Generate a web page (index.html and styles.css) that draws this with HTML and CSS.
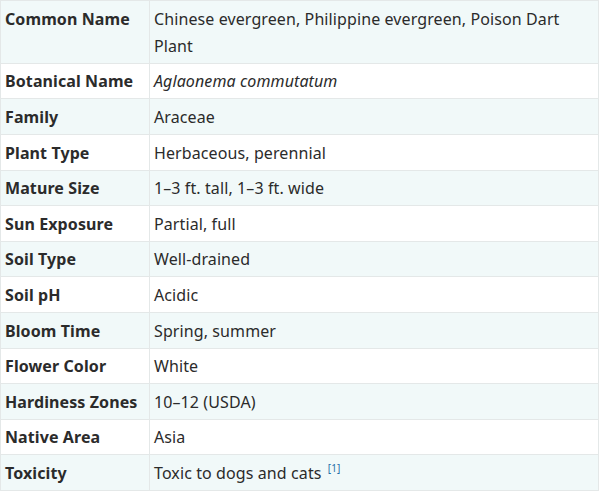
FILE: index.html
```html
<!DOCTYPE html>
<html>
<head>
<meta charset="utf-8">
<link rel="stylesheet" href="styles.css">
</head>
<body>
<table class="info">
  <tbody>
    <tr><th>Common Name</th><td>Chinese evergreen, Philippine evergreen, Poison Dart Plant</td></tr>
    <tr><th>Botanical Name</th><td><em>Aglaonema commutatum</em></td></tr>
    <tr><th>Family</th><td>Araceae</td></tr>
    <tr><th>Plant Type</th><td>Herbaceous, perennial</td></tr>
    <tr><th>Mature Size</th><td>1–3 ft. tall, 1–3 ft. wide</td></tr>
    <tr><th>Sun Exposure</th><td>Partial, full</td></tr>
    <tr><th>Soil Type</th><td>Well-drained</td></tr>
    <tr><th>Soil pH</th><td>Acidic</td></tr>
    <tr><th>Bloom Time</th><td>Spring, summer</td></tr>
    <tr><th>Flower Color</th><td>White</td></tr>
    <tr><th>Hardiness Zones</th><td>10–12 (USDA)</td></tr>
    <tr><th>Native Area</th><td>Asia</td></tr>
    <tr><th>Toxicity</th><td>Toxic to dogs and cats <sup class="ref">[1]</sup></td></tr>
  </tbody>
</table>
</body>
</html>
```
FILE: styles.css
```css
html, body {
  margin: 0;
  padding: 0;
  background: #ffffff;
}
.info {
  width: 599px;
  border-collapse: collapse;
  font-family: "Noto Sans", "Liberation Sans", sans-serif;
  font-size: 16px;
  color: #2b2b2b;
  letter-spacing: 0.1px;
}
.info th, .info td {
  border: 1px solid #e4e8e8;
  padding: 4.6px 4px 2.8px;
  line-height: 27.2px;
  vertical-align: top;
  text-align: left;
}
.info th {
  width: 140px;
  font-weight: 700;
}
.info td {
  font-weight: 400;
}
.info tr:nth-child(odd) {
  background: #f1f9f9;
}
.info tr:nth-child(even) {
  background: #ffffff;
}
.ref {
  color: #1f6fa8;
  font-size: 10px;
  line-height: 0;
  vertical-align: 7px;
  margin-left: 2px;
}
```
